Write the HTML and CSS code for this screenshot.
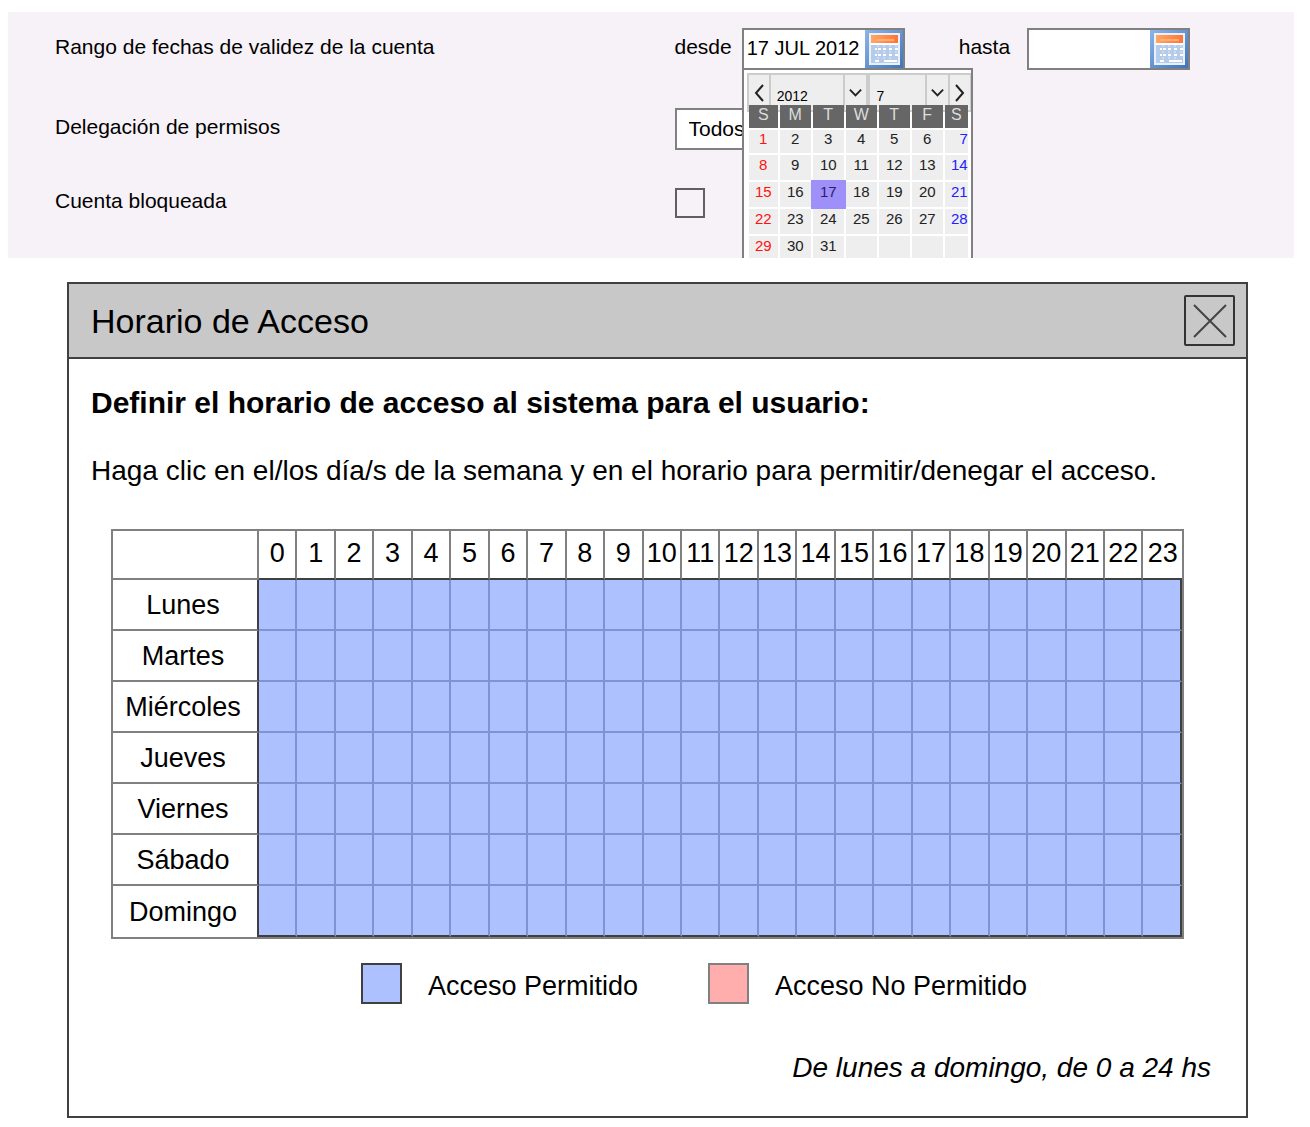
FILE: index.html
```
<!DOCTYPE html>
<html lang="es">
<head>
<meta charset="utf-8">
<meta name="viewport" content="width=device-width, initial-scale=1">
<title>Horario de Acceso</title>
<link rel="stylesheet" href="styles.css">
</head>
<body>
<svg class="defs" width="0" height="0" aria-hidden="true">
  <defs>
    <linearGradient id="frame" x1="0" y1="0" x2="1" y2="1">
      <stop offset="0" stop-color="#8fb4e6"/>
      <stop offset="1" stop-color="#3f74bb"/>
    </linearGradient>
    <linearGradient id="band" x1="0" y1="0" x2="1" y2="0">
      <stop offset="0" stop-color="#ffa766"/>
      <stop offset="1" stop-color="#ff7436"/>
    </linearGradient>
    <symbol id="calendar-icon" viewBox="0 0 38 38">
      <rect width="38" height="38" fill="url(#frame)"/>
      <rect x="4" y="3" width="31" height="32" fill="#e9f1fb"/>
      <rect x="6" y="14" width="27" height="19" fill="#b4cbeb"/>
      <rect x="6" y="5" width="27" height="8" fill="url(#band)"/>
      <rect x="10" y="9" width="19" height="2" fill="#ffb070"/>
      <rect x="6" y="13" width="27" height="2" fill="#fff"/>
      <path d="M13 15v2M19 15v2M25 15v2M31 15v2M13 21v2M19 21v2M25 21v2M31 21v2M13 27v2M19 27v2M25 27v2" stroke="#e3edf9" stroke-width="1"/>
      <path d="M10 19h2M13 19h3M18 19h3M24 19h3M30 19h3M10 25h2M13 25h3M18 25h3M24 25h3M30 25h3M10 31h4M19 31h13" stroke="#fff" stroke-width="2"/>
    </symbol>
  </defs>
</svg>

<main class="page">
  <form class="account">
    <label class="account-label" for="from">Rango de fechas de validez de la cuenta</label>
    <div class="range">
      <label for="from">desde</label>
      <div class="date date-from">
        <input id="from" class="date-input" type="text" value="17 JUL 2012">
        <button class="date-button" type="button"><svg class="date-icon"><use href="#calendar-icon"/></svg></button>
        <div class="picker">
          <div class="picker-nav">
            <button class="picker-arrow" type="button"><svg width="12" height="18" viewBox="0 0 12 18"><path d="M10 1L3 9l7 8"/></svg></button>
            <label class="picker-select picker-year"><select><option>2012</option></select><svg width="16" height="10" viewBox="0 0 16 10"><path d="M2 2l6 6 6-6"/></svg></label>
            <label class="picker-select picker-month"><select><option>7</option></select><svg width="16" height="10" viewBox="0 0 16 10"><path d="M2 2l6 6 6-6"/></svg></label>
            <button class="picker-arrow" type="button"><svg width="12" height="18" viewBox="0 0 12 18"><path d="M2 1l7 8-7 8"/></svg></button>
          </div>
          <table class="days">
            <thead>
              <tr><th>S</th><th>M</th><th>T</th><th>W</th><th>T</th><th>F</th><th>S</th></tr>
            </thead>
            <tbody>
              <tr><td>1</td><td>2</td><td>3</td><td>4</td><td>5</td><td>6</td><td>7</td></tr>
              <tr><td>8</td><td>9</td><td>10</td><td>11</td><td>12</td><td>13</td><td>14</td></tr>
              <tr><td>15</td><td>16</td><td class="today">17</td><td>18</td><td>19</td><td>20</td><td>21</td></tr>
              <tr><td>22</td><td>23</td><td>24</td><td>25</td><td>26</td><td>27</td><td>28</td></tr>
              <tr><td>29</td><td>30</td><td>31</td><td></td><td></td><td></td><td></td></tr>
            </tbody>
          </table>
        </div>
      </div>
      <label class="until" for="to">hasta</label>
      <div class="date">
        <input id="to" class="date-input" type="text">
        <button class="date-button" type="button"><svg class="date-icon"><use href="#calendar-icon"/></svg></button>
      </div>
    </div>

    <label class="account-label" for="delegation">Delegación de permisos</label>
    <select id="delegation" class="delegation"><option>Todos</option></select>

    <label class="account-label" for="blocked">Cuenta bloqueada</label>
    <input id="blocked" class="blocked" type="checkbox">
  </form>

  <section class="dialog">
    <header class="dialog-header">
      <h1 class="dialog-title">Horario de Acceso</h1>
      <button class="close" type="button"><svg width="34" height="34" viewBox="0 0 34 34"><path d="M1 1l32 32M33 1L1 33"/></svg></button>
    </header>
    <div class="dialog-body">
      <h2 class="lead">Definir el horario de acceso al sistema para el usuario:</h2>
      <p class="hint">Haga clic en el/los día/s de la semana y en el horario para permitir/denegar el acceso.</p>
      <table class="schedule">
        <thead><tr id="hours"><td class="corner"></td></tr></thead>
        <tbody id="week">
          <tr><th scope="row">Lunes</th></tr>
          <tr><th scope="row">Martes</th></tr>
          <tr><th scope="row">Miércoles</th></tr>
          <tr><th scope="row">Jueves</th></tr>
          <tr><th scope="row">Viernes</th></tr>
          <tr><th scope="row">Sábado</th></tr>
          <tr><th scope="row">Domingo</th></tr>
        </tbody>
      </table>
      <ul class="legend">
        <li><span class="swatch swatch-allowed"></span>Acceso Permitido</li>
        <li><span class="swatch swatch-denied"></span>Acceso No Permitido</li>
      </ul>
      <p class="summary">De lunes a domingo, de 0 a 24 hs</p>
    </div>
  </section>
</main>
<script src="schedule.js"></script>
</body>
</html>
```
FILE: styles.css
```
* { box-sizing: border-box; }

body {
  margin: 0;
  background: #fff;
  color: #000;
  font-family: "Liberation Sans", Arial, sans-serif;
  font-size: 21px;
}

input, select, button { font: inherit; color: inherit; border-radius: 0; }
button { padding: 0; border: 0; cursor: pointer; }
svg { display: block; fill: none; }
.defs { position: absolute; }

.page { padding: 12px 16px 10px 8px; }

/* Account form */
.account {
  display: grid;
  grid-template-columns: 1fr 1fr;
  row-gap: 38px;
  align-items: center;
  justify-items: start;
  padding: 16px 0 40px 47px;
  background: #f7f2f7;
  overflow: hidden;
}
.account-label { line-height: 24px; padding-bottom: 4px; }
.range { display: flex; align-items: center; line-height: 24px; }
.range > label { padding-bottom: 4px; }
.until { margin-left: 54px; }

.date {
  position: relative;
  display: flex;
  width: 163px;
  height: 42px;
  margin-left: 10px;
  border: 2px solid #808080;
  background: #fff;
}
.until + .date { margin-left: 17px; }
.date-input {
  flex: 1;
  min-width: 0;
  padding: 0 0 2px 3px;
  border: 0;
  background: none;
  font-size: 20px;
}
.date-button { width: 38px; background: none; }
.date-icon { width: 38px; height: 38px; }

.delegation {
  width: 230px;
  height: 42px;
  padding: 0 12px 2px;
  border: 2px solid #808080;
  background: #fff;
  appearance: none;
}
.blocked {
  width: 30px;
  height: 30px;
  margin: 0;
  border: 2px solid #606060;
  background: #f7f2f7;
  appearance: none;
}

/* Date picker */
.picker {
  position: absolute;
  top: 38px;
  left: -2px;
  width: 231px;
  padding: 3px 0 0 3px;
  border: 2px solid #808080;
  background: #fff;
  z-index: 1;
}
.picker-nav {
  display: flex;
  height: 39px;
  border: 2px solid #ccc;
  border-right-width: 1px;
  background: #eee;
}
.picker-nav svg { stroke: #222; stroke-width: 2; }
.picker-arrow { width: 20px; padding: 0 0 0 4px; background: none; }
.picker-select {
  display: flex;
  align-items: center;
  border: solid #ccc;
  border-width: 0 2px;
}
.picker-select svg { width: 23px; padding: 0 3px; height: 39px; border-left: 2px solid #ccc; }
.picker-select select {
  flex: 1;
  min-width: 0;
  height: 100%;
  padding: 6px 0 0 6px;
  border: 0;
  background: none;
  font-size: 14px;
  appearance: none;
}
.picker-year { flex: 99; }
.picker-month { flex: 80; }

.days {
  position: relative;
  width: 223px;
  margin-top: -9px;
  border-spacing: 2px;
  table-layout: fixed;
  font-size: 15px;
  line-height: 17px;
  text-align: center;
  color: #222;
}
.days th {
  width: 31px;
  height: 23px;
  padding: 0 0 4px;
  background: #666;
  color: #ddd;
  font-size: 16px;
  font-weight: normal;
}
.days th:first-child { width: 29px; }
.days th:last-child { width: 23px; }
.days td { height: 25px; padding: 0 0 6px; background: #eee; }
.days tbody tr:first-child td { height: 23px; }
.days td:first-child { color: #f11; }
.days td:last-child { color: #22f; text-align: right; }
.days .today { background: #9f8ff8; box-shadow: 0 0 0 2px #9f8ff8; color: #2c1a70; }

/* Schedule dialog */
.dialog {
  margin: 24px 46px 0 59px;
  border: 2px solid #404040;
}
.dialog-header {
  display: flex;
  align-items: center;
  justify-content: space-between;
  height: 75px;
  padding: 0 11px 0 22px;
  border-bottom: 2px solid #404040;
  background: #c8c8c8;
}
.dialog-title { margin: 0; font-size: 34px; font-weight: normal; line-height: 40px; }
.close {
  display: grid;
  place-items: center;
  width: 51px;
  height: 51px;
  border: 2px solid #333;
  border-radius: 2px;
  background: none;
}
.close svg { stroke: #444; stroke-width: 2; }

.dialog-body { padding: 28px 35px 32px 22px; font-size: 27px; line-height: 32px; }
.lead { margin: 0; font-size: 30px; line-height: 32px; }
.hint { margin: 36px 0 0; font-size: 28px; }

.schedule {
  width: calc(100% - 47px);
  margin: 42px 0 0 20px;
  border: 2px solid #808080;
  border-spacing: 0;
  table-layout: fixed;
}
.schedule th, .schedule td {
  height: 51px;
  padding: 0;
  border: solid #808080;
  border-width: 0 2px 2px 0;
  font-weight: normal;
  text-align: center;
  white-space: nowrap;
}
.schedule .corner { width: 146px; }
.schedule thead th, .schedule thead td { height: 49px; padding-bottom: 4px; }
.schedule thead th { border-bottom-color: #404040; }
.schedule thead th:last-child { border-right: 0; }
.schedule tbody th { padding-right: 4px; border-right-color: #404040; }
.schedule tbody tr:last-child th { border-bottom: 0; }
.schedule tbody td { border-color: #7f93cf; background: #adc0ff; }
.schedule tbody td.denied { background: #ffadad; }
.schedule tbody td:last-child { border-right-color: #404040; }
.schedule tbody tr:last-child td { border-bottom-color: #404040; }

.legend {
  display: flex;
  justify-content: center;
  gap: 70px;
  margin: 24px 0 0;
  padding: 0 0 0 86px;
  list-style: none;
}
.legend li { display: flex; align-items: flex-start; gap: 26px; line-height: 47px; }
.swatch { width: 41px; height: 41px; border: 2px solid #404040; background: #adc0ff; }
.swatch-denied { border-color: #808080; background: #ffadad; }

.summary { margin: 42px 0 0; font-size: 28px; text-align: right; font-style: italic; }
```
FILE: schedule.js
```
// Fills the hour headings and the clickable cells of the weekly grid.
const hours = document.getElementById("hours");
const rows = document.querySelectorAll("#week tr");

for (let h = 0; h < 24; h++) {
  const th = document.createElement("th");
  th.scope = "col";
  th.textContent = h;
  hours.append(th);
  rows.forEach(row => row.append(document.createElement("td")));
}

document.getElementById("week").addEventListener("click", e => {
  if (e.target.tagName === "TD") e.target.classList.toggle("denied");
});
```
